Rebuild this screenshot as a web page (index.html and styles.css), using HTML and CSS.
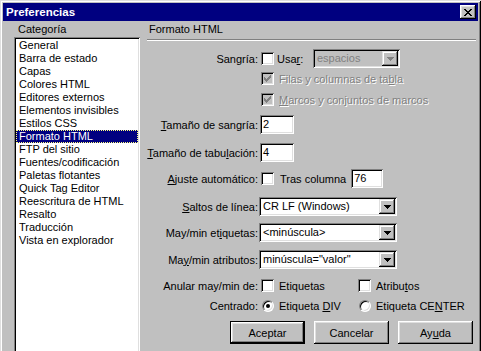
FILE: index.html
```html
<!DOCTYPE html>
<html lang="es">
<head>
    <meta charset="UTF-8">
    <title>Preferencias</title>
    <link rel="stylesheet" href="styles.css">
</head>
<body>
    <div class="dialog">
        <div class="titlebar">
            <span class="title">Preferencias</span>
            <button class="close-btn" title="Cerrar">
                <svg width="8" height="7" viewBox="0 0 8 7" shape-rendering="crispEdges"><path d="M0 0h2v1h-2zM6 0h2v1h-2zM1 1h2v1h-2zM5 1h2v1h-2zM2 2h4v1h-4zM3 3h2v1h-2zM2 4h4v1h-4zM1 5h2v1h-2zM5 5h2v1h-2zM0 6h2v1h-2zM6 6h2v1h-2z" fill="#000"/></svg>
            </button>
        </div>
        <div class="content">
            <div class="left">
                <div class="caption cat">Categoría</div>
                <ul class="listbox">
                    <li>General</li>
                    <li>Barra de estado</li>
                    <li>Capas</li>
                    <li>Colores HTML</li>
                    <li>Editores externos</li>
                    <li>Elementos invisibles</li>
                    <li>Estilos CSS</li>
                    <li class="selected">Formato HTML</li>
                    <li>FTP del sitio</li>
                    <li>Fuentes/codificación</li>
                    <li>Paletas flotantes</li>
                    <li>Quick Tag Editor</li>
                    <li>Reescritura de HTML</li>
                    <li>Resalto</li>
                    <li>Traducción</li>
                    <li>Vista en explorador</li>
                </ul>
            </div>
            <div class="right">
                <div class="caption heading">Formato HTML</div>
                <div class="separator"></div>

                <div class="field tall mt8">
                    <span class="lbl">Sangría:</span>
                    <span class="chk"></span>
                    <span class="usar">Usa<u>r</u>:</span>
                    <div class="combo disabled small">
                        <span class="combo-text">espacios</span>
                        <span class="combo-btn"><svg width="7" height="4" viewBox="0 0 7 4" shape-rendering="crispEdges"><path d="M0 0h7v1h-7zM1 1h5v1h-5zM2 2h3v1h-3zM3 3h1v1h-1z"/></svg></span>
                    </div>
                </div>
                <div class="field check-row mt4">
                    <span class="lbl"></span>
                    <span class="chk disabled"><svg width="13" height="13" viewBox="0 0 13 13" shape-rendering="crispEdges"><path d="M9 3h1v1h-1zM8 4h2v1h-2zM3 5h1v1h-1zM7 5h3v1h-3zM3 6h2v1h-2zM6 6h3v1h-3zM3 7h5v1h-5zM4 8h3v1h-3zM5 9h1v1h-1z"/></svg></span>
                    <span class="opt gray">Filas y columnas de ta<u>b</u>la</span>
                </div>
                <div class="field check-row mt8">
                    <span class="lbl"></span>
                    <span class="chk disabled"><svg width="13" height="13" viewBox="0 0 13 13" shape-rendering="crispEdges"><path d="M9 3h1v1h-1zM8 4h2v1h-2zM3 5h1v1h-1zM7 5h3v1h-3zM3 6h2v1h-2zM6 6h3v1h-3zM3 7h5v1h-5zM4 8h3v1h-3zM5 9h1v1h-1z"/></svg></span>
                    <span class="opt gray"><u>M</u>arcos y conjuntos de marcos</span>
                </div>

                <div class="field tall mt9">
                    <span class="lbl"><u>T</u>amaño de sangría:</span>
                    <span class="edit">2</span>
                </div>
                <div class="field tall mt9">
                    <span class="lbl"><u>T</u>amaño de tabu<u>l</u>ación:</span>
                    <span class="edit">4</span>
                </div>
                <div class="field tall mt7">
                    <span class="lbl"><u>A</u>juste automático:</span>
                    <span class="chk"></span>
                    <span class="tras">Tras columna</span>
                    <span class="edit narrow">76</span>
                </div>

                <div class="field tall mt9">
                    <span class="lbl"><u>S</u>altos de línea:</span>
                    <div class="combo">
                        <span class="combo-text">CR LF (Windows)</span>
                        <span class="combo-btn"><svg width="7" height="4" viewBox="0 0 7 4" shape-rendering="crispEdges"><path d="M0 0h7v1h-7zM1 1h5v1h-5zM2 2h3v1h-3zM3 3h1v1h-1z"/></svg></span>
                    </div>
                </div>
                <div class="field tall mt7">
                    <span class="lbl">May/min et<u>i</u>quetas:</span>
                    <div class="combo">
                        <span class="combo-text">&lt;minúscula&gt;</span>
                        <span class="combo-btn"><svg width="7" height="4" viewBox="0 0 7 4" shape-rendering="crispEdges"><path d="M0 0h7v1h-7zM1 1h5v1h-5zM2 2h3v1h-3zM3 3h1v1h-1z"/></svg></span>
                    </div>
                </div>
                <div class="field tall mt8">
                    <span class="lbl">Ma<u>y</u>/min atributos:</span>
                    <div class="combo">
                        <span class="combo-text">minúscula="valor"</span>
                        <span class="combo-btn"><svg width="7" height="4" viewBox="0 0 7 4" shape-rendering="crispEdges"><path d="M0 0h7v1h-7zM1 1h5v1h-5zM2 2h3v1h-3zM3 3h1v1h-1z"/></svg></span>
                    </div>
                </div>

                <div class="field check-row mt10">
                    <span class="lbl">Anular may/min de:</span>
                    <span class="pair">
                        <span class="chk"></span>
                        <span class="opt">Etiquetas</span>
                    </span>
                    <span class="chk"></span>
                    <span class="opt">Atribu<u>t</u>os</span>
                </div>
                <div class="field radio-row mt8">
                    <span class="lbl">Centrado:</span>
                    <span class="pair">
                        <span class="radio on"></span>
                        <span class="opt">Etiqueta <u>D</u>IV</span>
                    </span>
                    <span class="radio"></span>
                    <span class="opt">Etiqueta CE<u>N</u>TER</span>
                </div>

                <div class="buttons">
                    <button class="btn default">Aceptar</button>
                    <button class="btn">Cancelar</button>
                    <button class="btn">Ay<u>u</u>da</button>
                </div>
            </div>
        </div>
    </div>
</body>
</html>
```

FILE: styles.css
```css
html, body { margin: 0; height: 351px; overflow: hidden; }
body { font-family: "Liberation Sans", Arial, sans-serif; font-size: 11px; color: #000; background: #c0c0c0; }
u { text-decoration: underline; text-underline-offset: 1px; }

/* dialog is cut off at the bottom, so only top/left/right frame edges */
.dialog { width: 481px; height: 351px; overflow: hidden; box-sizing: border-box; padding: 3px 3px 0; background: #c0c0c0;
    box-shadow: inset 1px 1px #dfdfdf, inset -1px 0 #000, inset 2px 2px #fff, inset -2px 0 #808080; }
.titlebar { height: 18px; background: #000080; display: flex; align-items: center; justify-content: space-between; }
.title { color: #fff; font-weight: bold; font-size: 11.5px; padding-left: 3px; }
.close-btn { width: 16px; height: 14px; margin-right: 2px; padding: 0; border: none; background: #c0c0c0; display: flex; align-items: center; justify-content: center;
    box-shadow: inset -1px -1px #000, inset 1px 1px #fff, inset -2px -2px #808080, inset 2px 2px #dfdfdf; }

.content { display: flex; gap: 7px; padding: 0 2px 0 11px; }
.left { width: 126px; flex: none; }
.right { flex: 1; }
.caption { height: 16px; line-height: 16px; }
.cat { padding-left: 4px; }
.heading { padding-left: 2px; }

.listbox { list-style: none; margin: 0; padding: 2px; height: 330px; background: #fff;
    box-shadow: inset 1px 1px #808080, inset -1px -1px #fff, inset 2px 2px #000, inset -2px -2px #dfdfdf; }
.listbox li { height: 13px; line-height: 13px; padding-left: 3px; white-space: nowrap; }
.listbox li.selected { background: #000080; color: #fff; outline: 1px dotted #ffff80; outline-offset: -1px; }

.separator { margin-top: 2px; height: 0; border-top: 1px solid #808080; border-bottom: 1px solid #fff; }

.field { display: flex; align-items: center; }
.field.tall { height: 19px; }
.field.check-row { height: 13px; }
.field.radio-row { height: 12px; }
.mt4 { margin-top: 4px; }
.mt7 { margin-top: 7px; }
.mt8 { margin-top: 8px; }
.mt9 { margin-top: 9px; }
.mt10 { margin-top: 10px; }
.lbl { width: 111px; flex: none; text-align: right; margin-right: 2px; white-space: nowrap; }

.chk { width: 13px; height: 13px; flex: none; box-sizing: border-box; margin-left: 1px; background: #fff; display: block;
    box-shadow: inset 1px 1px #808080, inset -1px -1px #fff, inset 2px 2px #000, inset -2px -2px #dfdfdf; }
.chk svg { display: block; fill: #000; }
.chk.disabled { background: #c0c0c0; }
.chk.disabled svg { fill: #808080; }
.radio { width: 12px; height: 12px; flex: none; box-sizing: border-box; margin-left: 2px; border-radius: 50%; background: #fff; position: relative;
    border: 1px solid; border-color: #808080 #fff #fff #808080; box-shadow: inset 1px 1px #000, inset -1px -1px #dfdfdf; }
.radio.on::after { content: ""; position: absolute; left: 3px; top: 3px; width: 4px; height: 4px; border-radius: 50%; background: #000; }

.opt { margin-left: 5px; white-space: nowrap; }
.opt.gray { color: #808080; text-shadow: 1px 1px #fff; }
.pair { display: flex; align-items: center; width: 97px; flex: none; }
.usar { margin-left: 3px; width: 36px; }
.tras { margin-left: 6px; margin-right: 5px; }

.edit { width: 34px; height: 19px; box-sizing: border-box; padding: 3px 0 0 3px; line-height: 13px; background: #fff;
    box-shadow: inset 1px 1px #808080, inset -1px -1px #fff, inset 2px 2px #000, inset -2px -2px #dfdfdf; }
.edit.narrow { width: 32px; }

.combo { width: 138px; height: 19px; box-sizing: border-box; margin-left: -1px; padding: 2px; display: flex; align-items: stretch; background: #fff;
    box-shadow: inset 1px 1px #808080, inset -1px -1px #fff, inset 2px 2px #000, inset -2px -2px #dfdfdf; }
.combo.small { width: 87px; margin-left: 0; }
.combo-text { flex: 1; padding-left: 2px; line-height: 15px; white-space: nowrap; overflow: hidden; }
.combo-btn { width: 16px; flex: none; background: #c0c0c0; display: flex; align-items: center; justify-content: center;
    box-shadow: inset -1px -1px #000, inset 1px 1px #dfdfdf, inset -2px -2px #808080, inset 2px 2px #fff; }
.combo-btn svg { fill: #000; }
.combo.disabled { background: #c0c0c0; }
.combo.disabled .combo-text { color: #808080; }
.combo.disabled .combo-btn svg { fill: #808080; }

.buttons { display: flex; justify-content: flex-end; gap: 9px; margin-top: 9px; padding-right: 3px; }
.btn { width: 75px; height: 23px; padding: 0; border: none; background: #c0c0c0; font-family: inherit; font-size: 11px; color: #000;
    box-shadow: inset -1px -1px #000, inset 1px 1px #fff, inset -2px -2px #808080, inset 2px 2px #dfdfdf; }
.btn.default { box-shadow: inset 0 0 0 1px #000, inset -2px -2px #000, inset 2px 2px #fff, inset -3px -3px #808080, inset 3px 3px #dfdfdf; }
```
